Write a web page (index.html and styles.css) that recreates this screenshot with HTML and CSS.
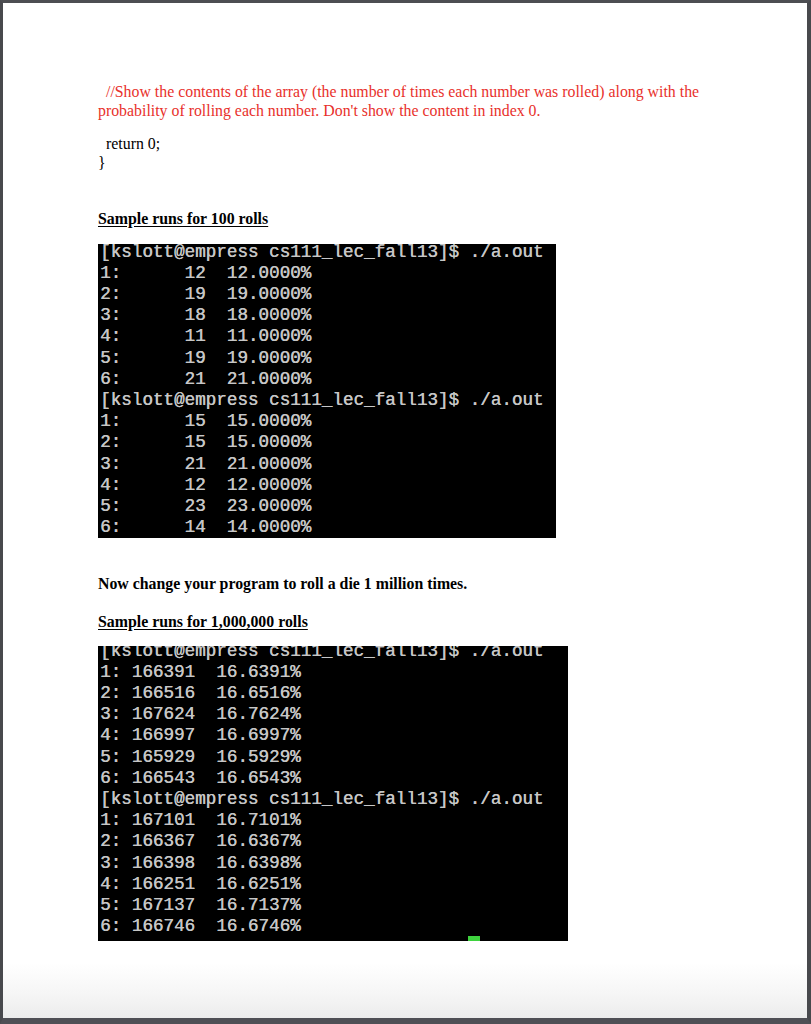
FILE: index.html
```html
<!DOCTYPE html>
<html>
<head>
<meta charset="utf-8">
<link rel="stylesheet" href="styles.css">
</head>
<body>
<div class="frame">
  <div class="page">
    <p class="comment"><span class="indent"></span>//Show the contents of the array (the number of times each number was rolled) along with the probability of rolling each number. Don't show the content in index 0.</p>
    <p class="code"><span class="indent"></span>return 0;<br>}</p>
    <h2 class="heading h1">Sample runs for 100 rolls</h2>
    <div class="term t1"><pre class="out o1">[kslott@empress cs111_lec_fall13]$ ./a.out
1:      12  12.0000%
2:      19  19.0000%
3:      18  18.0000%
4:      11  11.0000%
5:      19  19.0000%
6:      21  21.0000%
[kslott@empress cs111_lec_fall13]$ ./a.out
1:      15  15.0000%
2:      15  15.0000%
3:      21  21.0000%
4:      12  12.0000%
5:      23  23.0000%
6:      14  14.0000%</pre></div>
    <p class="bold now">Now change your program to roll a die 1 million times.</p>
    <h2 class="heading h2">Sample runs for 1,000,000 rolls</h2>
    <div class="term t2"><pre class="out o2">[kslott@empress cs111_lec_fall13]$ ./a.out
1: 166391  16.6391%
2: 166516  16.6516%
3: 167624  16.7624%
4: 166997  16.6997%
5: 165929  16.5929%
6: 166543  16.6543%
[kslott@empress cs111_lec_fall13]$ ./a.out
1: 167101  16.7101%
2: 166367  16.6367%
3: 166398  16.6398%
4: 166251  16.6251%
5: 167137  16.7137%
6: 166746  16.6746%</pre><span class="cursor"></span></div>
  </div>
</div>
</body>
</html>
```

FILE: styles.css
```css
html, body {
  margin: 0;
  padding: 0;
  background: #4b4b50;
}

.frame {
  width: 811px;
  height: 1024px;
  box-sizing: border-box;
  border-top: 3px solid #4d4e52;
  border-left: 3px solid #48494d;
  border-right: 4px solid #48494d;
  border-bottom: 6px solid #4f4f55;
  background: linear-gradient(to bottom, #ffffff 0px, #ffffff 960px, #f6f6f6 990px, #ececec 1015px);
}

.page {
  padding: 80px 0 0 95px;
  font-family: "Liberation Serif", "Times New Roman", serif;
  font-size: 15.85px;
  line-height: 18.5px;
  color: #000;
}

.page p, .page h2 {
  margin: 0;
}

.indent {
  display: inline-block;
  width: 8px;
}

.comment {
  color: #e8302b;
  width: 620px;
}

.code {
  margin-top: 15px !important;
}

.heading {
  font-size: 15.85px;
  font-weight: bold;
  text-decoration: underline;
  text-underline-offset: 2px;
}

.h1 {
  margin-top: 38px !important;
}

.bold {
  font-weight: bold;
}

.now {
  margin-top: 37px !important;
}

.h2 {
  margin-top: 20px !important;
}

.term {
  position: relative;
  background: #000;
  overflow: hidden;
}

.t1 {
  width: 458px;
  height: 294px;
  margin-top: 15px;
}

.t2 {
  width: 470px;
  height: 295px;
  margin-top: 14px;
}

.out {
  margin: 0;
  padding-left: 2px;
  font-family: "Liberation Mono", "Courier New", monospace;
  font-size: 17.6px;
  line-height: 21.2px;
  color: #c6c6c6;
  text-shadow: 0.4px 0 0 #c6c6c6;
}

.o1 {
  margin-top: -2px;
}

.o2 {
  margin-top: -5px;
}

.cursor {
  position: absolute;
  left: 370px;
  top: 290px;
  width: 12px;
  height: 5px;
  background: #3ed23e;
}
```
